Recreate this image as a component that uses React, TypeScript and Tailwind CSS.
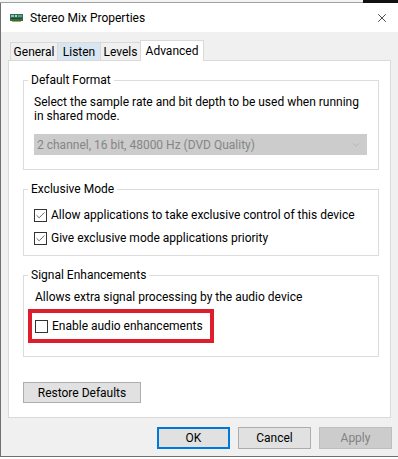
import { X, ChevronDown, Check } from "lucide-react"

const tabs = [
  { label: "General", w: "w-[48px]", hover: false },
  { label: "Listen", w: "w-[44px]", hover: true },
  { label: "Levels", w: "w-[41px]", hover: false },
]

function CheckBox({ checked }: { checked: boolean }) {
  return (
    <div className="w-[13px] h-[13px] border border-[#333333] bg-white flex items-center justify-center shrink-0">
      {checked && <Check className="w-[11px] h-[11px] text-[#333333]" strokeWidth={1.6} />}
    </div>
  )
}

function CardIcon() {
  return (
    <svg width="13" height="8" viewBox="0 0 13 8">
      <rect x="0" y="0" width="13" height="7" fill="#2f6e55" />
      <rect x="1" y="1" width="3" height="2" fill="#8fc6a8" />
      <rect x="5" y="1" width="2" height="2" fill="#a8d4bb" />
      <rect x="8" y="1" width="4" height="2" fill="#5fa07f" />
      <rect x="1" y="4" width="11" height="1" fill="#1d4a38" />
      <rect x="2" y="7" width="9" height="1" fill="#c9a23a" />
    </svg>
  )
}

export default function App() {
  return (
    <div className="w-[398px] h-[459px] overflow-hidden bg-white flex flex-col font-['Roboto','Noto_Sans',sans-serif] text-[12px] text-black whitespace-nowrap">
      {/* background window peeking out at the top */}
      <div className="h-[3px] flex shrink-0">
        <div className="flex-1 border-b border-[#a0a0a0] bg-[#f4f4f4]" />
        <div className="w-[35px] bg-[#111111]" />
      </div>

      <div className="flex-1 flex flex-col border-l border-b border-[#707070]">
        {/* Title bar */}
        <div className="h-[29px] bg-white flex items-center pl-[9px] pr-[9px] shrink-0">
          <CardIcon />
          <span className="ml-[7px] text-[12px] leading-none">Stereo Mix Properties</span>
          <X className="ml-auto w-[14px] h-[14px] text-black" strokeWidth={1.2} />
        </div>

        {/* Dialog body */}
        <div className="flex-1 bg-[#f0f0f0] flex flex-col pt-[8px]">
          {/* Tabs */}
          <div className="flex items-end h-[20px] ml-[9px]">
            {tabs.map((t, i) => (
              <div
                key={t.label}
                className={`${t.w} h-[18px] border border-b-0 border-[#d9d9d9] flex items-center justify-center ${i > 0 ? "-ml-px" : ""} ${t.hover ? "bg-[#d8e6f2]" : "bg-[#f0f0f0]"}`}
              >
                {t.label}
              </div>
            ))}
            <div className="w-[64px] h-[21px] -ml-px -mb-px border border-b-0 border-[#d9d9d9] bg-white flex items-start justify-center pt-[1px] relative z-10">
              Advanced
            </div>
          </div>

          {/* Tab panel */}
          <div className="ml-[7px] w-[383px] h-[358px] bg-white border border-[#d9d9d9] flex flex-col pl-[14px] shrink-0">
            <fieldset className="mt-[11px] w-[356px] h-[98px] border border-[#dcdcdc] px-[10px]">
              <legend className="ml-[-6px] px-[3px] leading-[16px]">Default Format</legend>
              <p className="mt-[7px] leading-[14px]">
                Select the sample rate and bit depth to be used when running
                <br />
                in shared mode.
              </p>
              <div className="mt-[11px] w-[333px] h-[21px] bg-[#cccccc] flex items-center pl-[3px] pr-[6px] text-[#858585]">
                <span>2 channel, 16 bit, 48000 Hz (DVD Quality)</span>
                <ChevronDown className="ml-auto w-[10px] h-[10px] text-[#a6a6a6]" strokeWidth={1.5} />
              </div>
            </fieldset>

            <fieldset className="mt-[11px] w-[356px] h-[75px] border border-[#dcdcdc] px-[10px]">
              <legend className="ml-[-6px] px-[3px] leading-[16px]">Exclusive Mode</legend>
              <div className="mt-[10px] h-[16px] flex items-center gap-[4px]">
                <CheckBox checked />
                <span>Allow applications to take exclusive control of this device</span>
              </div>
              <div className="mt-[7px] h-[16px] flex items-center gap-[4px]">
                <CheckBox checked />
                <span>Give exclusive mode applications priority</span>
              </div>
            </fieldset>

            <fieldset className="mt-[11px] w-[356px] h-[90px] border border-[#dcdcdc]">
              <legend className="ml-[4px] px-[3px] leading-[16px]">Signal Enhancements</legend>
              <p className="mt-[7px] ml-[11px] leading-[14px]">Allows extra signal processing by the audio device</p>
              <div className="mt-[5px] ml-[4px] w-[186px] h-[34px] border-[4px] border-[#dd1f2d] flex items-center pl-[3px] gap-[4px]">
                <CheckBox checked={false} />
                <span>Enable audio enhancements</span>
              </div>
            </fieldset>

            <button className="mt-[25px] w-[118px] h-[21px] bg-[#e1e1e1] border border-[#adadad] leading-none">
              Restore Defaults
            </button>
          </div>

          {/* Dialog buttons */}
          <div className="mt-[9px] ml-[156px] flex gap-[8px]">
            <button className="w-[73px] h-[22px] bg-[#e1e1e1] border-2 border-[#0078d7] leading-none">OK</button>
            <button className="w-[73px] h-[22px] bg-[#e1e1e1] border border-[#adadad] leading-none">Cancel</button>
            <button className="w-[73px] h-[22px] bg-[#cccccc] border border-[#bfbfbf] text-[#838383] leading-none">
              Apply
            </button>
          </div>
        </div>
      </div>
      <div className="h-[2px] bg-white shrink-0" />
    </div>
  )
}
